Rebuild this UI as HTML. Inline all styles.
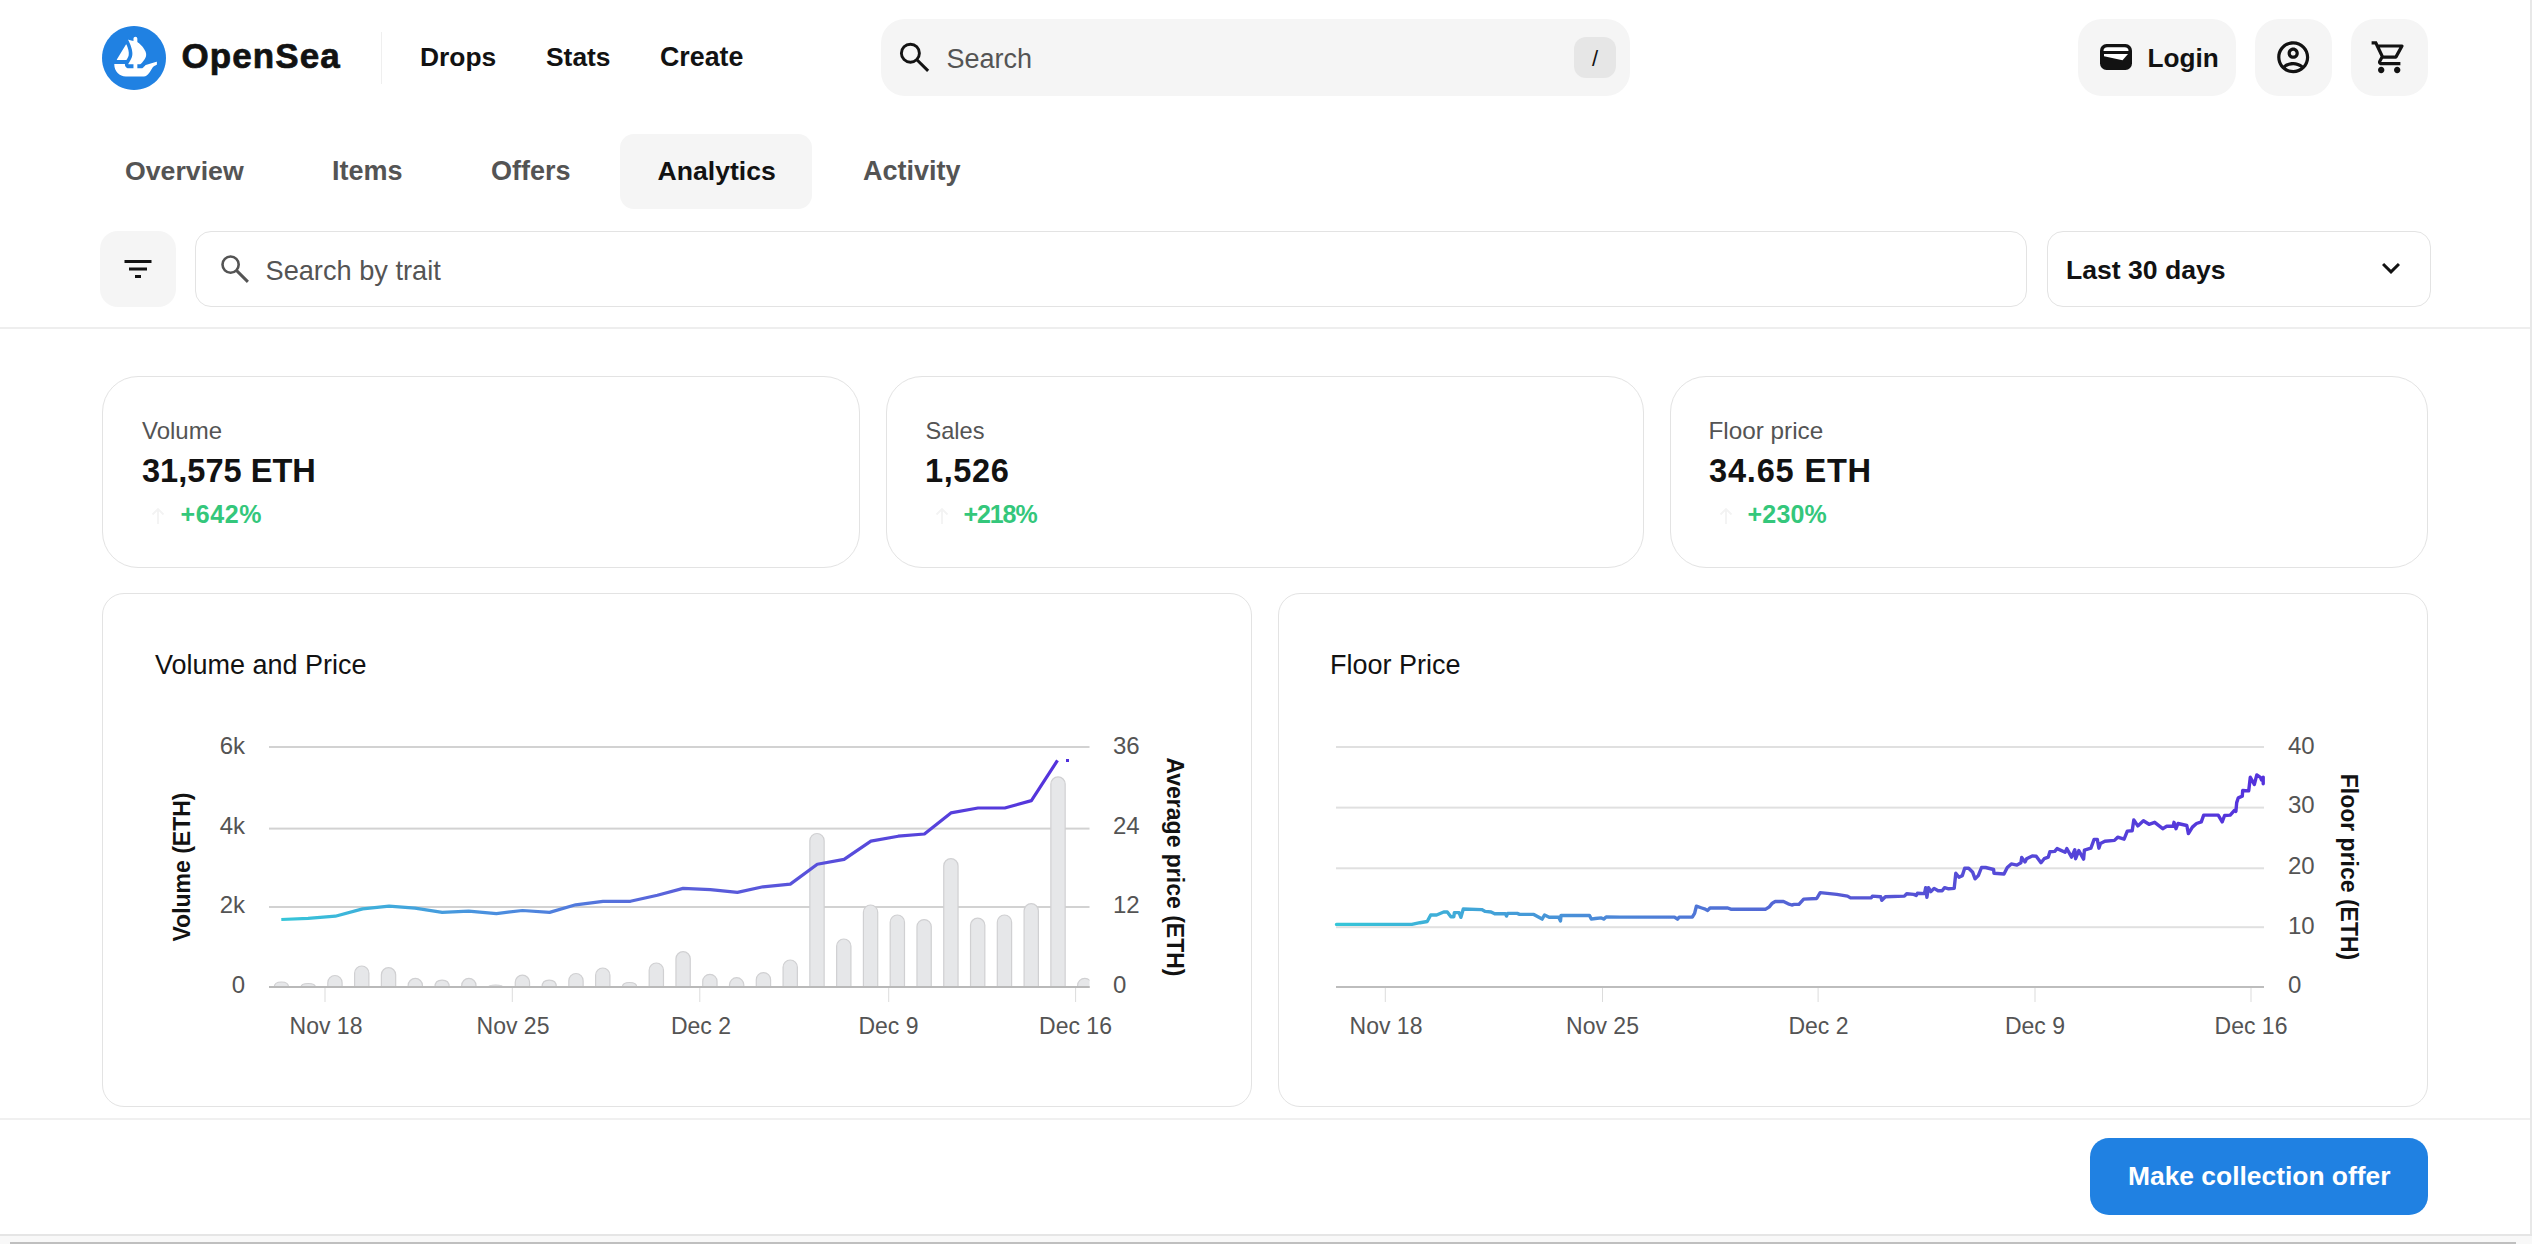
<!DOCTYPE html>
<html><head><meta charset="utf-8">
<style>
html,body{margin:0;padding:0;background:#fff;}
body{width:2532px;height:1244px;position:relative;overflow:hidden;font-family:"Liberation Sans",sans-serif;color:#121212;}
.a{position:absolute;}
.t{position:absolute;white-space:nowrap;line-height:1;}
.b{font-weight:bold;}
.box{position:absolute;box-sizing:border-box;}
</style></head>
<body>
<!-- HEADER -->
<svg class="a" style="left:102px;top:26px" width="64" height="64" viewBox="0 0 90 90"><path d="M90 45C90 69.85 69.85 90 45 90C20.15 90 0 69.85 0 45C0 20.15 20.15 0 45 0C69.86 0 90 20.15 90 45Z" fill="#2081E2"/><g transform="translate(47.3 42.9) scale(1.08 1.12) translate(-46.7 -42.9)"><path d="M22.2 46.51L22.4 46.21L34.1 27.89C34.27 27.63 34.67 27.65 34.8 27.94C36.76 32.33 38.45 37.78 37.66 41.17C37.32 42.57 36.39 44.46 35.35 46.21C35.22 46.46 35.07 46.71 34.92 46.95C34.84 47.06 34.72 47.13 34.58 47.13H22.54C22.22 47.13 22.03 46.78 22.2 46.51Z" fill="#fff"/><path d="M74.38 49.91V52.81C74.38 52.98 74.28 53.13 74.13 53.19C73.22 53.58 70.12 55.01 68.83 56.8C65.54 61.38 63.03 67.93 57.4 67.93H33.95C25.64 67.93 18.9 61.17 18.9 52.83V52.56C18.9 52.34 19.08 52.16 19.3 52.16H32.38C32.64 52.16 32.83 52.4 32.8 52.66C32.71 53.51 32.87 54.38 33.27 55.17C34.05 56.74 35.66 57.73 37.39 57.73H43.87V52.68H37.47C37.14 52.68 36.95 52.3 37.13 52.03C37.2 51.92 37.28 51.81 37.37 51.69C37.97 50.83 38.84 49.49 39.7 47.97C40.28 46.94 40.85 45.85 41.31 44.75C41.4 44.55 41.48 44.34 41.55 44.14C41.67 43.79 41.8 43.47 41.9 43.14C41.99 42.86 42.06 42.57 42.14 42.3C42.35 41.36 42.45 40.37 42.45 39.35C42.45 38.94 42.43 38.52 42.39 38.12C42.37 37.68 42.32 37.24 42.26 36.8C42.22 36.41 42.15 36.03 42.08 35.63C41.99 35.04 41.86 34.46 41.71 33.87L41.66 33.65C41.55 33.25 41.46 32.86 41.33 32.46C40.96 31.2 40.54 29.97 40.1 28.82C39.94 28.36 39.75 27.92 39.57 27.48C39.29 26.82 39.02 26.22 38.76 25.65C38.63 25.39 38.52 25.16 38.41 24.92C38.28 24.65 38.16 24.37 38.03 24.11C37.93 23.91 37.83 23.73 37.75 23.54L36.96 22.08C36.85 21.88 37.04 21.65 37.26 21.71L42.2 23.05H42.22C42.23 23.05 42.23 23.05 42.24 23.05L42.89 23.24L43.6 23.44L43.87 23.51V20.58C43.87 19.16 45 18 46.4 18C47.1 18 47.74 18.29 48.19 18.75C48.65 19.22 48.94 19.86 48.94 20.58V24.93L49.47 25.08C49.51 25.09 49.55 25.11 49.59 25.14C49.72 25.24 49.9 25.38 50.14 25.56C50.32 25.7 50.52 25.88 50.76 26.07C51.24 26.45 51.8 26.94 52.42 27.5C52.59 27.65 52.75 27.79 52.9 27.94C53.69 28.67 54.57 29.54 55.42 30.49C55.65 30.76 55.89 31.02 56.12 31.31C56.36 31.61 56.61 31.9 56.83 32.19C57.12 32.57 57.43 32.97 57.7 33.38C57.83 33.58 57.97 33.78 58.1 33.98C58.44 34.51 58.75 35.05 59.04 35.6C59.17 35.85 59.3 36.13 59.41 36.4C59.73 37.13 59.99 37.88 60.16 38.62C60.21 38.79 60.25 38.96 60.27 39.12V39.16C60.32 39.38 60.34 39.61 60.36 39.85C60.43 40.62 60.4 41.39 60.23 42.16C60.16 42.49 60.07 42.8 59.96 43.13C59.85 43.44 59.73 43.77 59.59 44.08C59.31 44.72 58.99 45.37 58.6 45.97C58.47 46.19 58.32 46.42 58.18 46.65C58.01 46.88 57.85 47.1 57.7 47.32C57.5 47.6 57.28 47.89 57.06 48.15C56.86 48.42 56.66 48.7 56.43 48.94C56.12 49.3 55.83 49.65 55.52 49.98C55.33 50.2 55.13 50.42 54.93 50.62C54.73 50.84 54.53 51.04 54.34 51.22C54.03 51.53 53.77 51.77 53.56 51.97L53.05 52.44C52.97 52.5 52.88 52.54 52.77 52.54H48.94V57.73H53.76C54.84 57.73 55.87 57.35 56.7 56.64C56.98 56.4 58.22 55.32 59.68 53.7C59.73 53.65 59.8 53.61 59.87 53.59L73.84 49.55C74.1 49.48 74.38 49.68 74.38 49.91Z" fill="#fff"/></g></svg>
<div class="t b" id="logo" style="left:181.5px;top:38px;font-size:35px;letter-spacing:1.1px;-webkit-text-stroke:0.7px #121212">OpenSea</div>
<div class="box" style="left:380.5px;top:32px;width:1.5px;height:52px;background:#efefef"></div>
<div class="t b" style="left:420px;top:44px;font-size:26.4px;">Drops</div>
<div class="t b" style="left:546px;top:44px;font-size:26.4px;">Stats</div>
<div class="t b" style="left:660px;top:44px;font-size:26.8px;">Create</div>

<div class="box" style="left:881px;top:19px;width:749px;height:77px;background:#f5f5f5;border-radius:24px"></div>
<div class="t" style="left:946.5px;top:46px;font-size:27px;color:#545454">Search</div>
<div class="box" style="left:1574px;top:37px;width:42px;height:41px;background:#e6e6e6;border-radius:12px"></div>
<div class="t" style="left:1592px;top:47.5px;font-size:22px;color:#121212">/</div>

<div class="box" style="left:2078px;top:19px;width:158px;height:77px;background:#f5f5f5;border-radius:24px"></div>
<div class="t b" style="left:2147.5px;top:44.5px;font-size:26.2px;">Login</div>
<div class="box" style="left:2255px;top:19px;width:77px;height:77px;background:#f5f5f5;border-radius:24px"></div>
<div class="box" style="left:2351px;top:19px;width:77px;height:77px;background:#f5f5f5;border-radius:24px"></div>

<!-- TABS -->
<div class="box" style="left:620px;top:133.5px;width:192px;height:75.5px;background:#f5f5f5;border-radius:14px"></div>
<div class="t b" style="left:125px;top:158.2px;font-size:26.7px;color:#545454">Overview</div>
<div class="t b" style="left:332px;top:158.2px;font-size:27px;color:#545454">Items</div>
<div class="t b" style="left:491px;top:158.2px;font-size:27px;color:#545454">Offers</div>
<div class="t b" style="left:657.5px;top:158.2px;font-size:26.6px;color:#121212">Analytics</div>
<div class="t b" style="left:863px;top:158.2px;font-size:27px;color:#545454">Activity</div>

<!-- FILTER ROW -->
<div class="box" style="left:100px;top:230.5px;width:76px;height:76px;background:#f5f5f5;border-radius:18px"></div>
<div class="box" style="left:195px;top:231px;width:1832px;height:76px;border:1.5px solid #e3e3e3;border-radius:16px"></div>
<div class="t" style="left:265.5px;top:256.5px;font-size:27.2px;color:#545454">Search by trait</div>
<div class="box" style="left:2047px;top:231px;width:384px;height:76px;border:1.5px solid #e3e3e3;border-radius:16px"></div>
<div class="t b" style="left:2066px;top:256.5px;font-size:26.6px;">Last 30 days</div>

<div class="box" style="left:0;top:327px;width:2530px;height:2px;background:#eeeeee"></div>
<div class="box" style="left:2530px;top:0;width:2px;height:1236px;background:#e8e8e8"></div>

<!-- STAT CARDS -->
<div class="box" style="left:102px;top:376px;width:758px;height:192px;border:1.5px solid #e3e3e3;border-radius:36px"></div>
<div class="box" style="left:886px;top:376px;width:758px;height:192px;border:1.5px solid #e3e3e3;border-radius:36px"></div>
<div class="box" style="left:1670px;top:376px;width:758px;height:192px;border:1.5px solid #e3e3e3;border-radius:36px"></div>
<div class="t" style="left:142px;top:419px;font-size:24px;color:#545454">Volume</div>
<div class="t b" style="left:142px;top:455px;font-size:32.6px;">31,575 ETH</div>
<div class="t b" style="left:180.5px;top:501.5px;font-size:25px;letter-spacing:0.6px;color:#34c77b">+642%</div>
<div class="t" style="left:925.5px;top:420px;font-size:23.6px;color:#545454">Sales</div>
<div class="t b" style="left:925px;top:455px;font-size:32.6px;letter-spacing:0.6px">1,526</div>
<div class="t b" style="left:963.5px;top:501.5px;font-size:25px;letter-spacing:-1.1px;color:#34c77b">+218%</div>
<div class="t" style="left:1708.5px;top:419px;font-size:24.3px;color:#545454">Floor price</div>
<div class="t b" style="left:1709px;top:455px;font-size:32.6px;letter-spacing:0.8px">34.65 ETH</div>
<div class="t b" style="left:1747.5px;top:501.5px;font-size:25px;letter-spacing:0.2px;color:#34c77b">+230%</div>

<!-- CHART CARDS -->
<div class="box" style="left:102px;top:593px;width:1150px;height:514px;border:1.5px solid #e3e3e3;border-radius:22px"></div>
<div class="box" style="left:1278px;top:593px;width:1150px;height:514px;border:1.5px solid #e3e3e3;border-radius:22px"></div>
<div class="t" style="left:155px;top:651.6px;font-size:27px;">Volume and Price</div>
<div class="t" style="left:1330px;top:651.6px;font-size:27px;">Floor Price</div>


<!-- ICONS -->
<svg class="a" style="left:890px;top:33px" width="45" height="45" viewBox="0 0 45 45"><circle cx="20.4" cy="20.2" r="9.0" fill="none" stroke="#121212" stroke-width="2.9"/><path d="M26.9 26.7 L38.1 37.9" stroke="#121212" stroke-width="3"/></svg>
<svg class="a" style="left:2100px;top:44px" width="32" height="26" viewBox="0 0 32 26"><rect x="0" y="0" width="32" height="26" rx="6.5" fill="#121212"/><path d="M3.5 7 Q3.5 3.3 7.5 3.3 H24.5 Q28.5 3.3 28.5 7 V7 H3.5Z" fill="#fff"/><path d="M4 10 H28 L22.5 16.3 L4 12.3Z" fill="#fff"/></svg>
<svg class="a" style="left:2273.8px;top:37.8px" width="38.4" height="38.4" viewBox="0 0 24 24"><path fill="#121212" d="M12 2C6.48 2 2 6.48 2 12s4.48 10 10 10 10-4.48 10-10S17.52 2 12 2zM7.35 18.5C8.66 17.56 10.26 17 12 17s3.34.56 4.65 1.5c-1.310.94-2.91 1.5-4.65 1.5s-3.34-.56-4.65-1.5zm10.79-1.38C16.45 15.8 14.32 15 12 15s-4.45.8-6.14 2.12C4.7 15.73 4 13.95 4 12c0-4.42 3.58-8 8-8s8 3.58 8 8c0 1.95-.7 3.73-1.86 5.12zM12 6c-1.93 0-3.5 1.57-3.5 3.5S10.07 13 12 13s3.5-1.57 3.5-3.5S13.93 6 12 6zm0 5c-.83 0-1.5-.67-1.5-1.5S11.17 8 12 8s1.5.67 1.5 1.5S12.83 11 12 11z"/></svg>
<svg class="a" style="left:2369.6px;top:38px" width="38.4" height="38.4" viewBox="0 0 24 24"><path fill="#121212" d="M15.55 13c.75 0 1.41-.41 1.75-1.03l3.58-6.49A.996.996 0 0 0 20.01 4H5.21l-.94-2H1v2h2l3.6 7.59-1.35 2.44C4.52 15.37 5.48 17 7 17h12v-2H7l1.1-2h7.45zM6.16 6h12.15l-2.76 5H8.53L6.16 6zM7 18c-1.1 0-1.99.9-1.99 2S5.9 22 7 22s2-.9 2-2-.9-2-2-2zm10 0c-1.1 0-1.99.9-1.99 2s.89 2 1.99 2 2-.9 2-2-.9-2-2-2z"/></svg>
<svg class="a" style="left:119.5px;top:251px" width="36" height="36" viewBox="0 0 24 24"><path fill="#121212" d="M10 18h4v-2h-4v2zM3 6v2h18V6H3zm3 7h12v-2H6v2z"/></svg>
<svg class="a" style="left:215px;top:249px" width="40" height="40" viewBox="0 0 40 40"><circle cx="15.6" cy="15.6" r="8.1" fill="none" stroke="#545454" stroke-width="2.6"/><path d="M21.4 21.4 L32.9 32.9" stroke="#545454" stroke-width="2.9"/></svg>
<svg class="a" style="left:2373.3px;top:249.8px" width="36" height="36" viewBox="0 0 24 24"><path fill="#121212" d="M16.59 8.59L12 13.17 7.41 8.59 6 10l6 6 6-6z"/></svg>
<svg class="a" style="left:148px;top:506px" width="20" height="20" viewBox="0 0 20 20"><path d="M10 18V3 M4.5 8.5 L10 3 L15.5 8.5" fill="none" stroke="#f3f3f3" stroke-width="1.8"/></svg>
<svg class="a" style="left:932px;top:506px" width="20" height="20" viewBox="0 0 20 20"><path d="M10 18V3 M4.5 8.5 L10 3 L15.5 8.5" fill="none" stroke="#f3f3f3" stroke-width="1.8"/></svg>
<svg class="a" style="left:1716px;top:506px" width="20" height="20" viewBox="0 0 20 20"><path d="M10 18V3 M4.5 8.5 L10 3 L15.5 8.5" fill="none" stroke="#f3f3f3" stroke-width="1.8"/></svg>
<!--CHARTS-->
<svg class="a" style="left:0;top:0" width="2532" height="1244" viewBox="0 0 2532 1244">
<defs><linearGradient id="g1" gradientUnits="userSpaceOnUse" x1="281" y1="0" x2="1060" y2="0"><stop offset="0" stop-color="#36c6d8"/><stop offset="0.27" stop-color="#4a8fdf"/><stop offset="0.5" stop-color="#5a62da"/><stop offset="1" stop-color="#5432dc"/></linearGradient>
<linearGradient id="g2" gradientUnits="userSpaceOnUse" x1="1336" y1="0" x2="2263" y2="0"><stop offset="0" stop-color="#36c6d8"/><stop offset="0.27" stop-color="#4a8cd8"/><stop offset="0.55" stop-color="#5658d4"/><stop offset="1" stop-color="#5432dc"/></linearGradient>
<clipPath id="c1"><rect x="269" y="740" width="820.5" height="248"/></clipPath></defs>
<rect x="269" y="746" width="820.5" height="2" fill="#d2d2d2"/>
<rect x="269" y="827.6" width="820.5" height="2" fill="#d2d2d2"/>
<rect x="269" y="906" width="820.5" height="2" fill="#d2d2d2"/>
<rect x="269" y="986" width="820.5" height="2" fill="#b9b9b9"/>
<rect x="324.5" y="988" width="1" height="14" fill="#dcdcdc"/>
<rect x="511.79999999999995" y="988" width="1" height="14" fill="#dcdcdc"/>
<rect x="699.3" y="988" width="1" height="14" fill="#dcdcdc"/>
<rect x="888.2" y="988" width="1" height="14" fill="#dcdcdc"/>
<rect x="1075.1" y="988" width="1" height="14" fill="#dcdcdc"/>
<path d="M274.25 987 Q274.25 982.00 281.40 982.00 Q288.55 982.00 288.55 987 Z" fill="#e6e7e9" stroke="#d0d0d2" stroke-width="1.2" clip-path="url(#c1)"/>
<path d="M301.03 987 Q301.03 983.50 308.18 983.50 Q315.33 983.50 315.33 987 Z" fill="#e6e7e9" stroke="#d0d0d2" stroke-width="1.2" clip-path="url(#c1)"/>
<path d="M327.81 987 V982.65 A7.15 7.15 0 0 1 342.11 982.65 V987 Z" fill="#e6e7e9" stroke="#d0d0d2" stroke-width="1.2" clip-path="url(#c1)"/>
<path d="M354.59 987 V973.15 A7.15 7.15 0 0 1 368.89 973.15 V987 Z" fill="#e6e7e9" stroke="#d0d0d2" stroke-width="1.2" clip-path="url(#c1)"/>
<path d="M381.37 987 V974.85 A7.15 7.15 0 0 1 395.67 974.85 V987 Z" fill="#e6e7e9" stroke="#d0d0d2" stroke-width="1.2" clip-path="url(#c1)"/>
<path d="M408.15 987 V985.55 A7.15 7.15 0 0 1 422.45 985.55 V987 Z" fill="#e6e7e9" stroke="#d0d0d2" stroke-width="1.2" clip-path="url(#c1)"/>
<path d="M434.93 987 Q434.93 980.20 442.08 980.20 Q449.23 980.20 449.23 987 Z" fill="#e6e7e9" stroke="#d0d0d2" stroke-width="1.2" clip-path="url(#c1)"/>
<path d="M461.71 987 V985.55 A7.15 7.15 0 0 1 476.01 985.55 V987 Z" fill="#e6e7e9" stroke="#d0d0d2" stroke-width="1.2" clip-path="url(#c1)"/>
<path d="M488.49 987 Q488.49 985.00 495.64 985.00 Q502.79 985.00 502.79 987 Z" fill="#e6e7e9" stroke="#d0d0d2" stroke-width="1.2" clip-path="url(#c1)"/>
<path d="M515.27 987 V982.35 A7.15 7.15 0 0 1 529.57 982.35 V987 Z" fill="#e6e7e9" stroke="#d0d0d2" stroke-width="1.2" clip-path="url(#c1)"/>
<path d="M542.05 987 Q542.05 980.20 549.20 980.20 Q556.35 980.20 556.35 987 Z" fill="#e6e7e9" stroke="#d0d0d2" stroke-width="1.2" clip-path="url(#c1)"/>
<path d="M568.83 987 V980.65 A7.15 7.15 0 0 1 583.13 980.65 V987 Z" fill="#e6e7e9" stroke="#d0d0d2" stroke-width="1.2" clip-path="url(#c1)"/>
<path d="M595.61 987 V975.15 A7.15 7.15 0 0 1 609.91 975.15 V987 Z" fill="#e6e7e9" stroke="#d0d0d2" stroke-width="1.2" clip-path="url(#c1)"/>
<path d="M622.39 987 Q622.39 982.50 629.54 982.50 Q636.69 982.50 636.69 987 Z" fill="#e6e7e9" stroke="#d0d0d2" stroke-width="1.2" clip-path="url(#c1)"/>
<path d="M649.17 987 V970.15 A7.15 7.15 0 0 1 663.47 970.15 V987 Z" fill="#e6e7e9" stroke="#d0d0d2" stroke-width="1.2" clip-path="url(#c1)"/>
<path d="M675.95 987 V958.85 A7.15 7.15 0 0 1 690.25 958.85 V987 Z" fill="#e6e7e9" stroke="#d0d0d2" stroke-width="1.2" clip-path="url(#c1)"/>
<path d="M702.73 987 V981.45 A7.15 7.15 0 0 1 717.03 981.45 V987 Z" fill="#e6e7e9" stroke="#d0d0d2" stroke-width="1.2" clip-path="url(#c1)"/>
<path d="M729.51 987 V984.85 A7.15 7.15 0 0 1 743.81 984.85 V987 Z" fill="#e6e7e9" stroke="#d0d0d2" stroke-width="1.2" clip-path="url(#c1)"/>
<path d="M756.29 987 V979.75 A7.15 7.15 0 0 1 770.59 979.75 V987 Z" fill="#e6e7e9" stroke="#d0d0d2" stroke-width="1.2" clip-path="url(#c1)"/>
<path d="M783.07 987 V967.15 A7.15 7.15 0 0 1 797.37 967.15 V987 Z" fill="#e6e7e9" stroke="#d0d0d2" stroke-width="1.2" clip-path="url(#c1)"/>
<path d="M809.85 987 V840.65 A7.15 7.15 0 0 1 824.15 840.65 V987 Z" fill="#e6e7e9" stroke="#d0d0d2" stroke-width="1.2" clip-path="url(#c1)"/>
<path d="M836.63 987 V946.15 A7.15 7.15 0 0 1 850.93 946.15 V987 Z" fill="#e6e7e9" stroke="#d0d0d2" stroke-width="1.2" clip-path="url(#c1)"/>
<path d="M863.41 987 V912.15 A7.15 7.15 0 0 1 877.71 912.15 V987 Z" fill="#e6e7e9" stroke="#d0d0d2" stroke-width="1.2" clip-path="url(#c1)"/>
<path d="M890.19 987 V922.15 A7.15 7.15 0 0 1 904.49 922.15 V987 Z" fill="#e6e7e9" stroke="#d0d0d2" stroke-width="1.2" clip-path="url(#c1)"/>
<path d="M916.97 987 V926.75 A7.15 7.15 0 0 1 931.27 926.75 V987 Z" fill="#e6e7e9" stroke="#d0d0d2" stroke-width="1.2" clip-path="url(#c1)"/>
<path d="M943.75 987 V865.75 A7.15 7.15 0 0 1 958.05 865.75 V987 Z" fill="#e6e7e9" stroke="#d0d0d2" stroke-width="1.2" clip-path="url(#c1)"/>
<path d="M970.53 987 V925.35 A7.15 7.15 0 0 1 984.83 925.35 V987 Z" fill="#e6e7e9" stroke="#d0d0d2" stroke-width="1.2" clip-path="url(#c1)"/>
<path d="M997.31 987 V922.15 A7.15 7.15 0 0 1 1011.61 922.15 V987 Z" fill="#e6e7e9" stroke="#d0d0d2" stroke-width="1.2" clip-path="url(#c1)"/>
<path d="M1024.09 987 V910.85 A7.15 7.15 0 0 1 1038.39 910.85 V987 Z" fill="#e6e7e9" stroke="#d0d0d2" stroke-width="1.2" clip-path="url(#c1)"/>
<path d="M1050.87 987 V784.05 A7.15 7.15 0 0 1 1065.17 784.05 V987 Z" fill="#e6e7e9" stroke="#d0d0d2" stroke-width="1.2" clip-path="url(#c1)"/>
<path d="M1077.65 987 V985.45 A7.15 7.15 0 0 1 1091.95 985.45 V987 Z" fill="#e6e7e9" stroke="#d0d0d2" stroke-width="1.2" clip-path="url(#c1)"/>
<rect x="269" y="986" width="820.5" height="2" fill="#b9b9b9"/>
<path d="M281.3 919.5 L308.1 918.3 L335.3 916.2 L362.6 908.9 L389.1 906.1 L415.0 908.2 L442.2 912.3 L468.7 911.1 L496.4 913.6 L522.5 910.5 L549.6 912.4 L575.7 904.8 L603.0 901.3 L630.4 901.3 L657.4 895.2 L683.1 888.4 L710.4 889.7 L737.4 892.4 L763.0 886.8 L790.3 884.1 L817.3 864.3 L844.1 859.4 L870.9 841.1 L898.2 836.2 L924.4 834.0 L950.9 812.9 L978.0 808.0 L1004.8 808.0 L1031.4 800.6 L1057.5 760.4" fill="none" stroke="url(#g1)" stroke-width="3.2" stroke-linejoin="round" stroke-linecap="butt"/>
<rect x="1066" y="759" width="3" height="3" fill="#5030dc"/>
<rect x="1336" y="746" width="928" height="2" fill="#e0e0e0"/>
<rect x="1336" y="806.6" width="928" height="2" fill="#e0e0e0"/>
<rect x="1336" y="867.3" width="928" height="2" fill="#e0e0e0"/>
<rect x="1336" y="926.2" width="928" height="2" fill="#e0e0e0"/>
<rect x="1336" y="986" width="928" height="2" fill="#bdbdbd"/>
<rect x="1384.8" y="988" width="1" height="14" fill="#dcdcdc"/>
<rect x="1602.0" y="988" width="1" height="14" fill="#dcdcdc"/>
<rect x="1817.6" y="988" width="1" height="14" fill="#dcdcdc"/>
<rect x="2034.5" y="988" width="1" height="14" fill="#dcdcdc"/>
<rect x="2250.5" y="988" width="1" height="14" fill="#dcdcdc"/>
<path d="M1336.5 924.4 L1411.8 924.4 L1420.0 922.7 L1427.2 921.5 L1430.7 915.0 L1436.6 915.0 L1443.7 912.0 L1447.3 912.0 L1450.9 916.7 L1453.8 916.7 L1454.4 912.6 L1459.1 912.6 L1460.9 917.3 L1463.3 909.0 L1481.7 909.6 L1485.2 911.4 L1491.1 912.0 L1494.7 913.8 L1505.4 913.8 L1506.5 916.1 L1507.7 913.4 L1517.2 913.4 L1519.6 914.4 L1533.8 914.4 L1542.1 919.1 L1544.5 915.0 L1549.2 917.3 L1558.7 917.3 L1560.5 920.9 L1561.0 915.5 L1589.5 915.5 L1591.3 919.1 L1595.4 918.5 L1601.3 917.9 L1603.7 919.1 L1606.1 917.0 L1620.0 917.1 L1674.5 917.1 L1677.5 919.2 L1679.2 917.1 L1692.3 917.1 L1694.6 913.3 L1696.4 906.2 L1701.8 908.0 L1705.3 909.2 L1707.7 910.4 L1710.0 908.0 L1727.8 908.0 L1730.8 909.2 L1765.7 909.2 L1769.3 906.8 L1772.3 903.2 L1775.2 901.5 L1783.5 901.5 L1788.2 903.8 L1791.8 905.0 L1794.2 904.4 L1798.9 904.4 L1803.7 899.1 L1816.7 898.5 L1820.2 892.6 L1836.8 894.4 L1847.5 896.1 L1850.5 897.9 L1871.2 897.9 L1872.4 896.1 L1880.7 896.7 L1881.8 900.3 L1885.4 896.7 L1904.4 896.1 L1906.7 893.8 L1913.8 894.4 L1916.2 895.5 L1917.4 893.2 L1924.5 893.6 L1925.7 887.6 L1926.9 897.3 L1928.5 887.6 L1930.9 891.6 L1934.1 888.4 L1938.1 890.8 L1942.2 890.8 L1944.6 887.6 L1948.6 888.8 L1954.2 888.4 L1955.8 873.2 L1959.0 877.2 L1962.3 875.6 L1964.7 868.3 L1968.7 868.3 L1972.7 872.3 L1975.1 878.8 L1978.3 875.6 L1981.5 867.5 L1985.6 867.5 L1993.6 869.5 L1994.0 873.2 L2004.0 874.0 L2007.3 867.5 L2011.3 863.9 L2016.9 865.1 L2020.9 862.7 L2021.7 857.5 L2025.0 861.9 L2026.6 858.7 L2032.2 855.9 L2036.2 856.3 L2041.0 862.7 L2044.2 858.7 L2048.3 857.1 L2049.9 851.8 L2054.7 851.4 L2057.1 848.6 L2065.1 852.3 L2066.8 848.6 L2071.6 857.1 L2074.8 849.8 L2075.6 858.7 L2078.8 850.6 L2083.6 859.1 L2084.4 850.2 L2090.9 848.2 L2094.1 839.4 L2097.3 839.4 L2098.9 848.2 L2100.5 843.4 L2104.8 841.2 L2114.5 840.4 L2117.7 837.2 L2124.1 839.2 L2127.3 831.1 L2132.2 830.7 L2133.8 819.9 L2137.8 825.9 L2143.4 820.7 L2149.0 824.3 L2154.7 822.3 L2162.7 828.7 L2166.7 826.3 L2173.2 826.3 L2174.0 822.3 L2176.0 828.7 L2178.0 823.5 L2186.8 825.5 L2188.4 833.6 L2192.4 827.1 L2196.5 823.5 L2201.3 821.9 L2203.7 815.1 L2218.2 815.1 L2222.2 821.9 L2224.6 815.5 L2230.2 815.1 L2234.2 810.6 L2235.9 811.4 L2236.7 802.6 L2238.3 797.8 L2242.3 796.2 L2242.7 790.5 L2248.7 790.9 L2250.3 777.3 L2254.3 784.5 L2256.8 774.9 L2260.4 777.3 L2261.6 780.1 L2263.2 777.3 L2263.2 783.7" fill="none" stroke="url(#g2)" stroke-width="3.4" stroke-linejoin="round" stroke-linecap="round"/>
</svg>
<div class="t" style="right:2287px;top:733.8px;font-size:24px;color:#545454">6k</div>
<div class="t" style="right:2287px;top:813.8px;font-size:24px;color:#545454">4k</div>
<div class="t" style="right:2287px;top:893.0px;font-size:24px;color:#545454">2k</div>
<div class="t" style="right:2287px;top:973.0px;font-size:24px;color:#545454">0</div>
<div class="t" style="left:1113px;top:733.8px;font-size:24px;color:#545454">36</div>
<div class="t" style="left:1113px;top:813.8px;font-size:24px;color:#545454">24</div>
<div class="t" style="left:1113px;top:893.0px;font-size:24px;color:#545454">12</div>
<div class="t" style="left:1113px;top:973.0px;font-size:24px;color:#545454">0</div>
<div class="t" style="left:2288px;top:733.8px;font-size:24px;color:#545454">40</div>
<div class="t" style="left:2288px;top:793.2px;font-size:24px;color:#545454">30</div>
<div class="t" style="left:2288px;top:854.0px;font-size:24px;color:#545454">20</div>
<div class="t" style="left:2288px;top:913.6px;font-size:24px;color:#545454">10</div>
<div class="t" style="left:2288px;top:973.1px;font-size:24px;color:#545454">0</div>
<div class="a" style="left:326px;top:1015.0px;width:0;height:0"><div class="t" style="left:0;top:0;transform:translateX(-50%);font-size:23px;color:#545454">Nov 18</div></div>
<div class="a" style="left:513px;top:1015.0px;width:0;height:0"><div class="t" style="left:0;top:0;transform:translateX(-50%);font-size:23px;color:#545454">Nov 25</div></div>
<div class="a" style="left:701px;top:1015.0px;width:0;height:0"><div class="t" style="left:0;top:0;transform:translateX(-50%);font-size:23px;color:#545454">Dec 2</div></div>
<div class="a" style="left:888.5px;top:1015.0px;width:0;height:0"><div class="t" style="left:0;top:0;transform:translateX(-50%);font-size:23px;color:#545454">Dec 9</div></div>
<div class="a" style="left:1075.5px;top:1015.0px;width:0;height:0"><div class="t" style="left:0;top:0;transform:translateX(-50%);font-size:23px;color:#545454">Dec 16</div></div>
<div class="a" style="left:1386px;top:1015.0px;width:0;height:0"><div class="t" style="left:0;top:0;transform:translateX(-50%);font-size:23px;color:#545454">Nov 18</div></div>
<div class="a" style="left:1602.5px;top:1015.0px;width:0;height:0"><div class="t" style="left:0;top:0;transform:translateX(-50%);font-size:23px;color:#545454">Nov 25</div></div>
<div class="a" style="left:1818.5px;top:1015.0px;width:0;height:0"><div class="t" style="left:0;top:0;transform:translateX(-50%);font-size:23px;color:#545454">Dec 2</div></div>
<div class="a" style="left:2035px;top:1015.0px;width:0;height:0"><div class="t" style="left:0;top:0;transform:translateX(-50%);font-size:23px;color:#545454">Dec 9</div></div>
<div class="a" style="left:2251px;top:1015.0px;width:0;height:0"><div class="t" style="left:0;top:0;transform:translateX(-50%);font-size:23px;color:#545454">Dec 16</div></div>
<div class="a" style="left:182px;top:866.5px;width:0;height:0"><div class="t b" style="left:0;top:0;transform:translate(-50%,-50%) rotate(-90deg);font-size:23px;color:#121212">Volume (ETH)</div></div>
<div class="a" style="left:1174px;top:866.9px;width:0;height:0"><div class="t b" style="left:0;top:0;transform:translate(-50%,-50%) rotate(90deg);font-size:23px;color:#121212">Average price (ETH)</div></div>
<div class="a" style="left:2347.8px;top:867.2px;width:0;height:0"><div class="t b" style="left:0;top:0;transform:translate(-50%,-50%) rotate(90deg);font-size:23px;color:#121212">Floor price (ETH)</div></div>
<!--/CHARTS-->
<!-- BOTTOM -->
<div class="box" style="left:0;top:1117.5px;width:2530px;height:2px;background:#f0f0f0"></div>
<div class="box" style="left:2090px;top:1138px;width:338px;height:77px;background:#2081e2;border-radius:19px"></div>
<div class="t b" style="left:2128px;top:1163px;font-size:26.4px;color:#fff">Make collection offer</div>
<div class="box" style="left:0;top:1234px;width:2532px;height:2px;background:#e5e5e5"></div>
<div class="box" style="left:0;top:1236px;width:2532px;height:8px;background:#f8f8f8"></div>
<div class="box" style="left:10px;top:1242px;width:2506px;height:2px;background:#bfbfbf"></div>
</body></html>
